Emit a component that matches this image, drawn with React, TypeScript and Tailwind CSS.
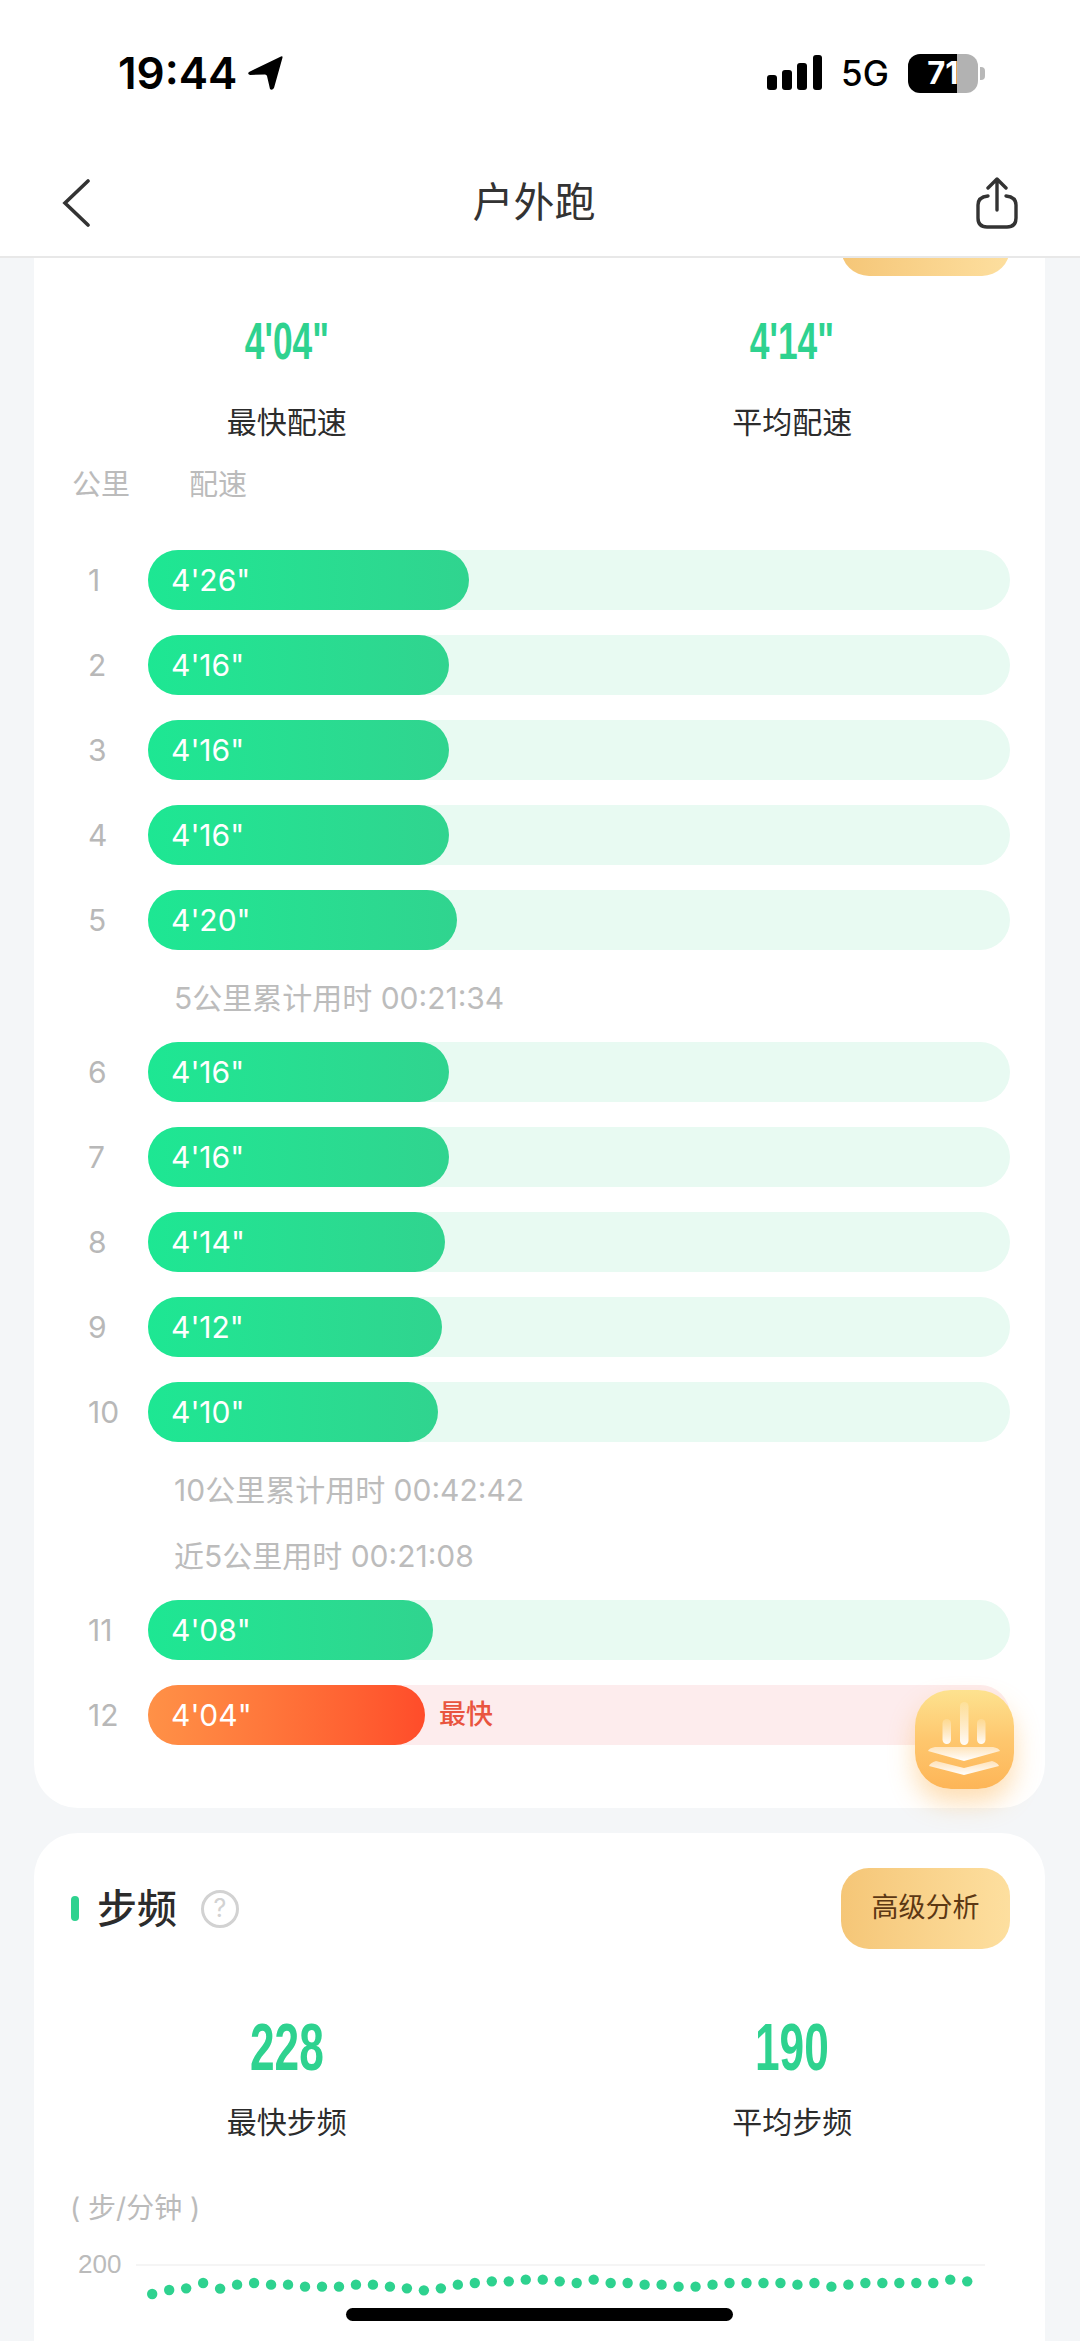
import React from "react";

type Lap = { km: number; pace: string; width: number; best?: boolean };

const firstLaps: Lap[] = [
  { km: 1, pace: "4'26\"", width: 321 },
  { km: 2, pace: "4'16\"", width: 301 },
  { km: 3, pace: "4'16\"", width: 301 },
  { km: 4, pace: "4'16\"", width: 301 },
  { km: 5, pace: "4'20\"", width: 309 },
];
const secondLaps: Lap[] = [
  { km: 6, pace: "4'16\"", width: 301 },
  { km: 7, pace: "4'16\"", width: 301 },
  { km: 8, pace: "4'14\"", width: 297 },
  { km: 9, pace: "4'12\"", width: 294 },
  { km: 10, pace: "4'10\"", width: 290 },
];
const lastLaps: Lap[] = [
  { km: 11, pace: "4'08\"", width: 285 },
  { km: 12, pace: "4'04\"", width: 277, best: true },
];

// Cadence samples, one dot every 17px along the chart.
const cadence = [
  438, 426, 421, 405, 422, 410, 405, 410, 410, 416, 416, 416, 410, 410, 416, 421, 427, 421, 410, 405, 400, 400, 395,
  395, 400, 405, 395, 405, 405, 410, 410, 416, 416, 410, 405, 405, 405, 405, 410, 405, 416, 410, 405, 405, 405, 405,
  405, 395, 400,
];

function LapRow({ lap }: { lap: Lap }) {
  return (
    <div className="flex items-center h-[60px]">
      <div className="w-[78px] pl-[18px] text-[30px] text-[#b8b8b8]">{lap.km}</div>
      <div className={`flex-1 h-[60px] rounded-[30px] flex items-center ${lap.best ? "bg-[#fdeced]" : "bg-[#e8faf2]"}`}>
        <div
          style={{ width: lap.width }}
          className={`h-[60px] rounded-[30px] pl-[23px] flex items-center text-[30px] text-white ${
            lap.best
              ? "bg-gradient-to-r from-[#ff9147] to-[#ff4c2a]"
              : "bg-gradient-to-r from-[#1de793] to-[#30d48f]"
          }`}
        >
          {lap.pace}
        </div>
        {lap.best && <span className="ml-[14px] text-[27px] font-medium text-[#e9553f]">最快</span>}
      </div>
    </div>
  );
}

function LapGroup({ laps }: { laps: Lap[] }) {
  return (
    <div className="flex flex-col gap-[25px]">
      {laps.map((lap) => (
        <LapRow key={lap.km} lap={lap} />
      ))}
    </div>
  );
}

function Note({ children }: { children: React.ReactNode }) {
  return <div className="h-[66px] pl-[104px] flex items-center text-[30px] text-[#bcbcbc]">{children}</div>;
}

function Stat({
  value,
  label,
  size,
  gap,
  scale,
}: {
  value: string;
  label: string;
  size: string;
  gap: string;
  scale: string;
}) {
  return (
    <div className="flex flex-col items-center">
      <div className={`${size} ${scale} font-bold text-[#2ed28f] font-['Liberation_Sans',sans-serif]`}>{value}</div>
      <div className={`${gap} h-[44px] leading-[44px] text-[30px] text-[#2c2c2c]`}>{label}</div>
    </div>
  );
}

function AnalysisButton() {
  return (
    <button className="w-[169px] h-[81px] rounded-[28px] bg-gradient-to-r from-[#f5c677] to-[#fddf9f] text-[27px] text-[#5c3814]">
      高级分析
    </button>
  );
}

function FloatingBadge() {
  return (
    <div className="absolute left-[915px] top-[1690px] w-[99px] h-[99px] rounded-[36px] bg-gradient-to-b from-[#fde28f] via-[#fec76e] to-[#fdb557] shadow-[0_14px_26px_rgba(253,181,87,0.45)]">
      <svg viewBox="0 0 99 99" className="w-[99px] h-[99px]">
        <defs>
          <linearGradient id="barFade" x1="0" y1="0" x2="0" y2="1">
            <stop offset="0" stopColor="#fff" stopOpacity="0.15" />
            <stop offset="1" stopColor="#fff" stopOpacity="0.95" />
          </linearGradient>
          <linearGradient id="layerFade" x1="0" y1="0" x2="0" y2="1">
            <stop offset="0" stopColor="#fff" stopOpacity="0.55" />
            <stop offset="1" stopColor="#fff" stopOpacity="1" />
          </linearGradient>
        </defs>
        <rect x="45" y="12" width="8.5" height="43" rx="4.2" fill="url(#barFade)" />
        <rect x="27.5" y="29" width="8.5" height="25" rx="4.2" fill="url(#barFade)" />
        <rect x="62" y="29" width="8.5" height="25" rx="4.2" fill="url(#barFade)" />
        <path d="M20 57H78Q84 58 85 61L49 71L13 61Q14 58 20 57Z" fill="url(#layerFade)" />
        <path d="M21 71L49 78L77 71Q83 73 84 76L49 85L14 76Q15 73 21 71Z" fill="url(#layerFade)" />
      </svg>
    </div>
  );
}

function CadenceChart() {
  return (
    <svg viewBox="34 2230 1011 111" className="block w-[1011px] h-[111px] -ml-[36px]">
      <text x="78" y="2275" fontSize="26" fill="#bbbbbb" fontFamily="'Liberation Sans', sans-serif">
        200
      </text>
      <line x1="136" y1="2267" x2="985" y2="2267" stroke="#f5f5f5" strokeWidth="2" />
      {cadence.map((y, i) => (
        <circle key={i} cx={152.2 + i * 16.98} cy={2150 + y / 3} r="5.2" fill="#2ed28f" />
      ))}
    </svg>
  );
}

export default function App() {
  return (
    <div className="relative w-[1080px] h-[2341px] overflow-hidden flex flex-col bg-[#f4f6f8] font-['Inter','Noto_Sans_CJK_SC',sans-serif]">
      <header className="shrink-0 relative z-10 bg-white border-b-2 border-[#e8e8e8]">
        {/* system status row */}
        <div className="h-[150px] pl-[118px] pr-[95px] pt-[46px] flex justify-between items-start text-black">
          <div className="flex items-center gap-[10px]">
            <span className="text-[44px] leading-[54px] font-semibold">19:44</span>
            <svg viewBox="0 0 36 36" className="w-[36px] h-[36px]">
              <path d="M34 1.5Q36 .5 35.4 3L27 33Q25 36 23 34L20 21Q19.6 19.5 18 19.5L3 20Q0 19 2 17Z" fill="#000" />
            </svg>
          </div>
          <div className="flex items-center h-[44px] mt-[5px]">
            <svg viewBox="0 0 55 36" className="w-[55px] h-[36px]">
              <rect x="0" y="20" width="10" height="15" rx="3" fill="#000" />
              <rect x="15" y="15" width="10" height="20" rx="3" fill="#000" />
              <rect x="30" y="8" width="10" height="27" rx="3" fill="#000" />
              <rect x="46" y="0" width="9" height="35" rx="3" fill="#000" />
            </svg>
            <span className="ml-[19px] w-[48px] text-[35px] font-medium">5G</span>
            <div className="ml-[19px] w-[70px] h-[39px] rounded-[12px] flex items-center justify-center bg-[linear-gradient(to_right,#000_70%,#b2b2b2_70%)] text-[31px] font-bold text-white">
              71
            </div>
            <div className="ml-[2px] w-[5px] h-[13px] rounded-r-[4px] bg-[#b8b8b8]" />
          </div>
        </div>
        {/* title row */}
        <nav className="h-[107px] px-[62px] flex items-center justify-between -mt-[1px]">
          <svg viewBox="0 0 30 48" className="w-[30px] h-[48px] text-[#333]">
            <path d="M26 2L3 24L26 46" fill="none" stroke="currentColor" strokeWidth="3.6" strokeLinecap="round" />
          </svg>
          <h1 className="text-[41px] font-normal text-[#333]">户外跑</h1>
          <svg viewBox="0 0 42 52" className="w-[42px] h-[52px] text-[#333]">
            <path
              d="M12 19Q2 20 2 28V41Q2 50 11 50H31Q40 50 40 41V28Q40 20 30 19"
              fill="none"
              stroke="currentColor"
              strokeWidth="3.4"
              strokeLinecap="round"
            />
            <path
              d="M21 33V3M12 11L21 2L30 11"
              fill="none"
              stroke="currentColor"
              strokeWidth="3.4"
              strokeLinecap="round"
              strokeLinejoin="round"
            />
          </svg>
        </nav>
      </header>

      <main className="flex-1 min-h-0 overflow-hidden pl-[34px] pr-[35px]">
        <div className="-mt-[98px] flex flex-col gap-[25px]">
          {/* pace card */}
          <section className="bg-white rounded-[44px] pl-[36px] pr-[35px] pt-[35px] pb-[63px]">
            <div className="flex justify-end">
              <AnalysisButton />
            </div>
            <div className="grid grid-cols-2 -ml-[36px] -mr-[35px] mt-[35px]">
              <Stat value={"4'04\""} label="最快配速" size="text-[52px] leading-[60px]" gap="mt-[29px]" scale="scale-x-[0.68]" />
              <Stat value={"4'14\""} label="平均配速" size="text-[52px] leading-[60px]" gap="mt-[29px]" scale="scale-x-[0.68]" />
            </div>
            <div className="mt-[21px] h-[40px] flex items-center pl-[2px] text-[29px] text-[#bbbbbb]">
              <span className="w-[117px]">公里</span>
              <span>配速</span>
            </div>
            <div className="mt-[45px]">
              <LapGroup laps={firstLaps} />
              <div className="pt-[15px] pb-[11px]">
                <Note>5公里累计用时 00:21:34</Note>
              </div>
              <LapGroup laps={secondLaps} />
              <div className="pt-[15px] pb-[11px]">
                <Note>10公里累计用时 00:42:42</Note>
                <Note>近5公里用时 00:21:08</Note>
              </div>
              <LapGroup laps={lastLaps} />
            </div>
          </section>

          {/* cadence card */}
          <section className="bg-white rounded-[44px] pl-[36px] pr-[35px] pt-[35px] h-[600px]">
            <div className="flex items-center justify-between h-[81px]">
              <div className="flex items-center">
                <span className="ml-[1px] w-[8px] h-[25px] rounded-full bg-[#2ed28f]" />
                <h2 className="ml-[18px] text-[40px] font-medium text-[#2c2c2c]">步频</h2>
                <span className="ml-[24px] w-[38px] h-[38px] rounded-full border-[3px] border-[#d2d2d2] flex items-center justify-center text-[25px] text-[#d2d2d2]">
                  ?
                </span>
              </div>
              <AnalysisButton />
            </div>
            <div className="grid grid-cols-2 -ml-[36px] -mr-[35px] mt-[60px]">
              <Stat value="228" label="最快步频" size="text-[67px] leading-[76px]" gap="mt-[15px]" scale="scale-x-[0.66]" />
              <Stat value="190" label="平均步频" size="text-[67px] leading-[76px]" gap="mt-[15px]" scale="scale-x-[0.66]" />
            </div>
            <div className="mt-[44px] h-[40px] flex items-center text-[28px] text-[#bbbbbb]">( 步/分钟 )</div>
            <CadenceChart />
          </section>
        </div>
      </main>

      <FloatingBadge />
      {/* home indicator */}
      <div className="absolute left-[346px] top-[2308px] w-[387px] h-[13px] rounded-full bg-black" />
    </div>
  );
}
